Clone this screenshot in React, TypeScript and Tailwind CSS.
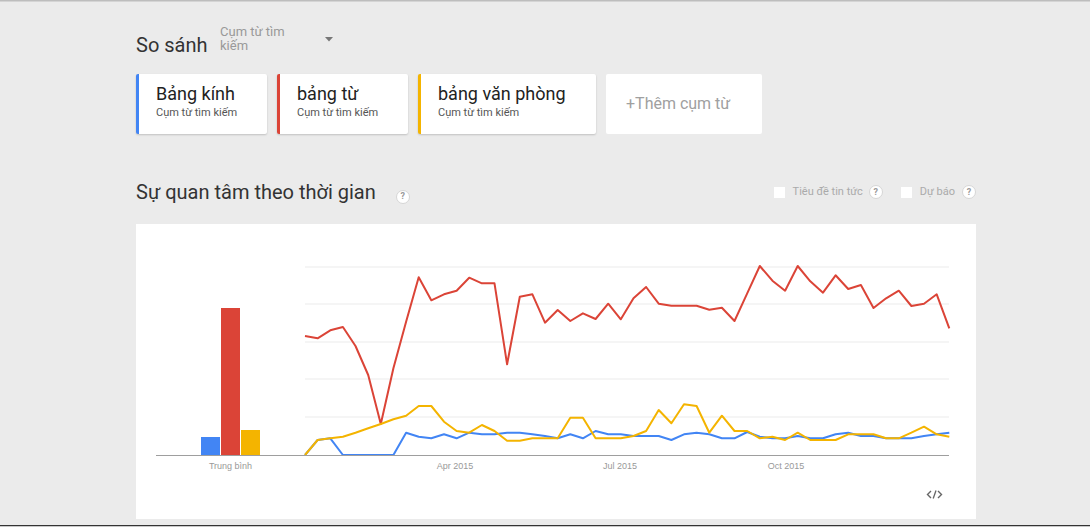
import React from "react";

const X0 = 305;
const STEP = (949.3 - 305) / 51;

const red = [336,338.3,330.3,327,346,375,424,368.3,321.7,277.3,300.3,294.3,290.7,277.7,283.3,283.3,364.3,296.7,294.3,322.7,310,321,313.3,319,303.7,319.3,298.3,287,303.7,305.7,305.7,305.7,309.7,307.7,321,293.3,266,280.7,290.7,266,281.3,292.7,275.3,289,285,308,298.3,290.7,306,303.7,294.3,328.3];
const blue = [455,440,438.3,455,455,455,455,455,432.7,436.7,438.3,434.3,438.3,432.7,434.3,434.3,432.7,432.7,434.3,436,438.3,434.3,438.3,431,434.3,434.3,436,436,436,440,434.3,432.7,434.3,438.3,438.3,432,436.7,438.3,438.3,436,438.3,438.3,434.3,432.7,436,436,438.3,438.3,438.3,436,434.3,432.7];
const yellow = [455,440,438.3,436.7,432.7,428.3,424,419.3,415.7,406,406,421.7,431,432.7,425,431,440.7,440.7,438.3,438.3,438.3,417.7,417.7,438.3,438.3,438.3,436,431,410,423.3,404.3,406,432.7,415.7,431,431,438.3,436.7,440,432.7,440,440,440,434.3,434.3,434.3,438.3,438.3,432.7,426.7,434.3,436.7];

const pts = (arr: number[]) =>
  arr.map((y, i) => `${(X0 + STEP * i).toFixed(1)},${y}`).join(" ");

function Help() {
  return (
    <span className="inline-flex items-center justify-center w-[14px] h-[14px] rounded-full bg-white border border-[#d6d6d6] text-[9px] font-bold text-[#9a9a9a] leading-none">
      ?
    </span>
  );
}

function Card({ color, title, width }: { color: string; title: string; width: string }) {
  return (
    <div
      className={`${width} h-[60px] bg-white rounded-[2px] shadow-[0_1px_2px_rgba(0,0,0,0.18)] border-l-[3px] ${color} pl-[17px] pt-[9px] flex flex-col`}
    >
      <div className="text-[18px] leading-[22px] text-[#222]">{title}</div>
      <div className="text-[11px] leading-[13px] mt-[1px] text-[#555]">Cụm từ tìm kiếm</div>
    </div>
  );
}

export default function App() {
  const grid = [267, 304, 342, 379, 417];
  return (
    <div className="w-[1090px] h-[527px] bg-[#ebebeb] overflow-hidden flex flex-col font-['Roboto','Liberation_Sans',sans-serif]">
      <div className="h-[1px] bg-[#bdbdbd]" />
      <div className="h-[1px] bg-[#d4d4d4]" />
      <div className="pl-[136px] w-[976px] flex flex-col">
        {/* header */}
        <div className="flex h-[49px] mt-[23px] items-start">
          <div className="w-[84px] mt-[9px] text-[20px] leading-[22px] text-[#333]">So sánh</div>
          <div className="w-[115px] flex items-start">
            <div className="w-[80px] text-[13px] leading-[14px] text-[#999]">Cụm từ tìm kiếm</div>
            <svg width="8" height="5" viewBox="0 0 8 5" className="ml-[25px] mt-[12px]">
              <path d="M0 0 L8 0 L4 4.5 Z" fill="#777" />
            </svg>
          </div>
        </div>
        {/* cards */}
        <div className="flex gap-[10px] h-[60px]">
          <Card color="border-l-[#4285f4]" title="Bảng kính" width="w-[131px]" />
          <Card color="border-l-[#db4437]" title="bảng từ" width="w-[131px]" />
          <Card color="border-l-[#f4b400]" title="bảng văn phòng" width="w-[178px]" />
          <div className="w-[156px] h-[60px] bg-white rounded-[2px] flex items-center pl-[20px] text-[16px] text-[#a0a0a0]">
            +Thêm cụm từ
          </div>
        </div>
        {/* section */}
        <div className="mt-[47px] h-[22px] flex items-center justify-between">
          <div className="flex items-center">
            <span className="text-[20px] leading-[22px] text-[#333]">Sự quan tâm theo thời gian</span>
            <span className="ml-[20px] mt-[9px] flex">
              <Help />
            </span>
          </div>
          <div className="flex items-center text-[11px] text-[#aaa]">
            <span className="w-[11px] h-[11px] bg-white" />
            <span className="ml-[8px]">Tiêu đề tin tức</span>
            <span className="ml-[6px] flex"><Help /></span>
            <span className="ml-[18px] w-[11px] h-[11px] bg-white" />
            <span className="ml-[8px]">Dự báo</span>
            <span className="ml-[7px] flex"><Help /></span>
          </div>
        </div>
        {/* chart */}
        <div className="mt-[21px] h-[295px] bg-white flex flex-col">
          <svg width="840" height="250" viewBox="136 224 840 250" className="block">
            {grid.map((y) => (
              <line key={y} x1={305} x2={949} y1={y} y2={y} stroke="#ebebeb" strokeWidth={1} />
            ))}
            <rect x={201} y={437} width={19} height={18} fill="#4285f4" />
            <rect x={221} y={308} width={19} height={147} fill="#db4437" />
            <rect x={241} y={430} width={19} height={25} fill="#f4b400" />
            <polyline points={pts(blue)} fill="none" stroke="#4285f4" strokeWidth={2} strokeLinejoin="round" />
            <polyline points={pts(red)} fill="none" stroke="#db4437" strokeWidth={2} strokeLinejoin="round" />
            <polyline points={pts(yellow)} fill="none" stroke="#f4b400" strokeWidth={2} strokeLinejoin="round" />
            <line x1={156} x2={949} y1={455.5} y2={455.5} stroke="#9e9e9e" strokeWidth={1} />
            <g fontFamily="'Liberation Sans', Arial, sans-serif" fontSize="9" fill="#999" textAnchor="middle">
              <text x={230.5} y={469}>Trung bình</text>
              <text x={455} y={469}>Apr 2015</text>
              <text x={620} y={469}>Jul 2015</text>
              <text x={786} y={469}>Oct 2015</text>
            </g>
          </svg>
          <div className="flex justify-end pr-[33px] pt-[16px]">
            <svg width="17" height="9" viewBox="0 0 17 9">
              <path d="M5 1 L1.5 4.5 L5 8" fill="none" stroke="#666" strokeWidth={1.4} />
              <path d="M10 0.5 L7.2 8.5" fill="none" stroke="#666" strokeWidth={1.3} />
              <path d="M12 1 L15.5 4.5 L12 8" fill="none" stroke="#666" strokeWidth={1.4} />
            </svg>
          </div>
        </div>
      </div>
      <div className="mt-auto h-[2px] border-t border-[#333] bg-[#c8c8c8]" />
    </div>
  );
}
